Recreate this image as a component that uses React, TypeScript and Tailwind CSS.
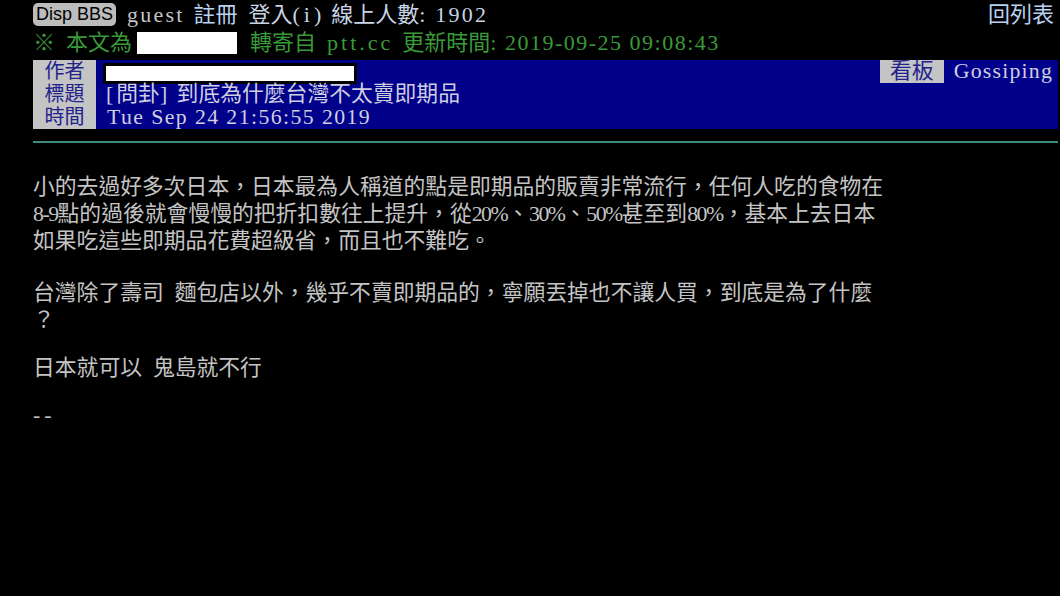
import React from "react";

function A({ children, t = "tracking-[1.3px]" }: { children: React.ReactNode; t?: string }) {
  return <span className={t}>{children}</span>;
}

const term = "font-['Liberation_Serif','Noto_Sans_CJK_TC',serif]";

function TopBar() {
  return (
    <div className={`flex items-center h-[27px] text-[22px] leading-[24px] pr-[4px] ${term}`}>
      <span className="bg-[#bcbcbc] rounded-[5px] px-[3px] h-[23px] leading-[23px] text-[18px] text-black font-['Liberation_Sans',sans-serif]">
        Disp BBS
      </span>
      <span className="ml-[11px] text-[#c4c4c4]">
        <A t="tracking-[2.2px]">guest</A>
      </span>
      <span className="ml-[9px] text-[#b8d2f0]">註冊</span>
      <span className="ml-[11px] text-[#c8d4e4]">
        登入<A t="tracking-[4px]">(i)</A>
      </span>
      <span className="ml-[6px] text-[#c8d4e4]">
        線上人數<A t="tracking-[2.2px]">: 1902</A>
      </span>
      <span className="ml-auto text-[#b8d2f0]">回列表</span>
    </div>
  );
}

function ForwardBar() {
  return (
    <div className={`flex items-center h-[30px] text-[22px] leading-[24px] text-[#3a9a3a] ${term}`}>
      <span>※</span>
      <span className="ml-[11px]">本文為</span>
      <span className="ml-[5px] w-[100px] h-[22px] bg-white"></span>
      <span className="ml-[13px]">轉寄自</span>
      <span className="ml-[11px]">
        <A t="tracking-[3px]">ptt.cc</A>
      </span>
      <span className="ml-[9px]">
        更新時間<A t="tracking-[1.5px]">: 2019-09-25 09:08:43</A>
      </span>
    </div>
  );
}

function Header() {
  const labels = ["作者", "標題", "時間"];
  return (
    <div className={`flex mt-[2px] h-[69px] text-[21.8px] leading-[23px] ${term}`}>
      <div className="w-[63px] bg-[#c4c4c4] flex flex-col">
        {labels.map((l) => (
          <div key={l} className="h-[23px] text-center text-[20px] text-[#22228c]">
            {l}
          </div>
        ))}
      </div>
      <div className="flex-1 bg-[#00008a] flex flex-col text-[#cfcfe0]">
        <div className="h-[23px] flex items-start">
          <div className="ml-[7px] mt-[3px] w-[254px] h-[21px] bg-black p-[3px]">
            <div className="w-full h-full bg-white"></div>
          </div>
          <span className="ml-auto w-[64px] h-[23px] bg-[#c4c4c4] text-[#22228c] text-center">看板</span>
          <span className="ml-[10px] mr-[5px]">
            <A t="tracking-[1.2px]">Gossiping</A>
          </span>
        </div>
        <div className="h-[23px] pl-[10px]">
          <A t="tracking-[3px]">[</A>問卦<A t="tracking-[2px]">]{"\u00a0"}</A>到底為什麼台灣不太賣即期品
        </div>
        <div className="h-[23px] pl-[11px]">
          <A t="tracking-[1.4px]">Tue Sep 24 21:56:55 2019</A>
        </div>
      </div>
    </div>
  );
}

function Body() {
  const line = "h-[27px] whitespace-nowrap";
  const n = "tracking-[-1.5px]";
  return (
    <div className={`mt-[31px] text-[21.8px] leading-[27px] text-[#c4c4c4] ${term}`}>
      <div>
        <div className={line}>小的去過好多次日本，日本最為人稱道的點是即期品的販賣非常流行，任何人吃的食物在</div>
        <div className={line}>
          <A t={n}>8-9</A>點的過後就會慢慢的把折扣數往上提升，從<A t={n}>20%</A>、<A t={n}>30%</A>、
          <A t={n}>50%</A>甚至到<A t={n}>80%</A>，基本上去日本
        </div>
        <div className={line}>如果吃這些即期品花費超級省，而且也不難吃。</div>
      </div>
      <div className="mt-[25px]">
        <div className={line}>台灣除了壽司{"\u00a0\u00a0"}麵包店以外，幾乎不賣即期品的，寧願丟掉也不讓人買，到底是為了什麼</div>
        <div className={line}>？</div>
      </div>
      <div className="mt-[21px]">
        <div className={line}>日本就可以{"\u00a0\u00a0"}鬼島就不行</div>
      </div>
      <div className="mt-[20px]">
        <div className={line}>
          <A t="tracking-[4px]">--</A>
        </div>
      </div>
    </div>
  );
}

export default function App() {
  return (
    <div className="w-[1060px] h-[596px] bg-black overflow-hidden">
      <div className="ml-[33px] w-[1025px] pt-[1px]">
        <TopBar />
        <ForwardBar />
        <Header />
        <div className="mt-[12px] h-[2px] bg-[#3f8a80]"></div>
        <Body />
      </div>
    </div>
  );
}
